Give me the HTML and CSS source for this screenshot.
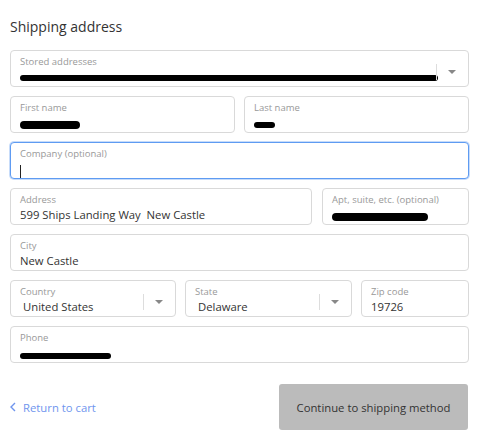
FILE: index.html
```html
<!DOCTYPE html>
<html>
<head>
<meta charset="utf-8">
<link rel="stylesheet" href="styles.css">
</head>
<body>
<div class="page">
  <h2 class="title">Shipping address</h2>
  <div class="form">
    <div class="row">
      <div class="field select">
        <div class="body">
          <span class="label">Stored addresses</span>
          <span class="value"><span class="redact r-stored"></span></span>
        </div>
        <span class="sep"></span><span class="caret"></span>
      </div>
    </div>
    <div class="row two">
      <div class="field"><div class="body"><span class="label">First name</span><span class="value"><span class="redact r-first"></span></span></div></div>
      <div class="field"><div class="body"><span class="label">Last name</span><span class="value"><span class="redact r-last"></span></span></div></div>
    </div>
    <div class="row">
      <div class="field focus"><div class="body"><span class="label">Company (optional)</span><span class="value"><span class="cursor"></span></span></div></div>
    </div>
    <div class="row addr">
      <div class="field"><div class="body"><span class="label">Address</span><span class="value">599 Ships Landing Way&nbsp; New Castle</span></div></div>
      <div class="field"><div class="body"><span class="label">Apt, suite, etc. (optional)</span><span class="value"><span class="redact r-apt"></span></span></div></div>
    </div>
    <div class="row">
      <div class="field"><div class="body"><span class="label">City</span><span class="value">New Castle</span></div></div>
    </div>
    <div class="row three">
      <div class="field select">
        <div class="body"><span class="label">Country</span><span class="value indent">United States</span></div>
        <span class="sep"></span><span class="caret"></span>
      </div>
      <div class="field select">
        <div class="body"><span class="label">State</span><span class="value indent">Delaware</span></div>
        <span class="sep"></span><span class="caret"></span>
      </div>
      <div class="field"><div class="body"><span class="label">Zip code</span><span class="value">19726</span></div></div>
    </div>
    <div class="row">
      <div class="field"><div class="body"><span class="label">Phone</span><span class="value"><span class="redact r-phone"></span></span></div></div>
    </div>
  </div>
  <div class="actions">
    <a class="back"><svg class="chev" width="6" height="10" viewBox="0 0 6 10"><path d="M5 1 L1 5 L5 9" fill="none" stroke="#6f95ee" stroke-width="1.4"/></svg>Return to cart</a>
    <button class="continue">Continue to shipping method</button>
  </div>
</div>
</body>
</html>
```
FILE: styles.css
```css
* { box-sizing: border-box; }
html, body { margin: 0; padding: 0; background: #fff; }
body { font-family: "Open Sans", "Noto Sans", sans-serif; color: #333; }
.page { width: 469px; padding: 0 0 0 10px; }
.title { margin: 0; padding-top: 17px; height: 50px; font-size: 14px; font-weight: 400; color: #333; line-height: 20px; }
.form { display: flex; flex-direction: column; gap: 9px; }
.row { display: grid; grid-template-columns: minmax(0, 1fr); gap: 9px; }
.row.two { grid-template-columns: minmax(0, 1fr) minmax(0, 1fr); }
.row.addr { grid-template-columns: 302px minmax(0, 1fr); gap: 10px; }
.row.three { grid-template-columns: 166px 167px minmax(0, 1fr); gap: 9px; }
.field { height: 37px; border: 1px solid #d9d9d9; border-radius: 4px; display: flex; align-items: center; background: #fff; min-width: 0; }
.field.focus { border-color: #5e9bf2; box-shadow: 0 0 0 1px rgba(94,155,242,0.35); }
.body { flex: 1; min-width: 0; padding: 2px 9px 0; display: flex; flex-direction: column; align-self: stretch; overflow: visible; }
.label { font-size: 9.5px; color: #999; line-height: 14px; margin-top: 2px; white-space: nowrap; }
.value { font-size: 11.3px; color: #333; line-height: 16px; height: 16px; display: flex; align-items: center; white-space: nowrap; }
.value.indent { padding-left: 3px; }
.sep { width: 1px; height: 16px; background: #ddd; align-self: center; margin-top: 6px; flex: none; }
.caret { flex: none; width: 0; height: 0; border-left: 4px solid transparent; border-right: 4px solid transparent; border-top: 4px solid #888; margin: 6px 12px 0 11px; }
.redact { display: inline-block; background: #000; border-radius: 4px; flex: none; }
.r-stored { width: 418px; height: 6px; margin-top: 2px; }
.r-first { width: 60px; height: 8px; margin-top: 4px; }
.r-last { width: 21px; height: 6px; margin-top: 4px; }
.r-apt { width: 96px; height: 8px; margin-top: 4px; }
.r-phone { width: 91px; height: 6px; margin-top: 6px; }
.cursor { display: inline-block; width: 1px; height: 13px; background: #222; margin-top: 4px; }
.actions { display: flex; justify-content: space-between; align-items: center; margin-top: 21px; padding-right: 1px; }
.back { display: flex; align-items: center; gap: 7px; color: #6f95ee; font-size: 11.3px; text-decoration: none; }
.chev { display: block; }
.continue { width: 189px; height: 46px; border: 0; border-radius: 3px; background: #bbbbbb; color: #333; font-family: "Open Sans", "Noto Sans", sans-serif; font-size: 11.3px; padding: 0; }
```
